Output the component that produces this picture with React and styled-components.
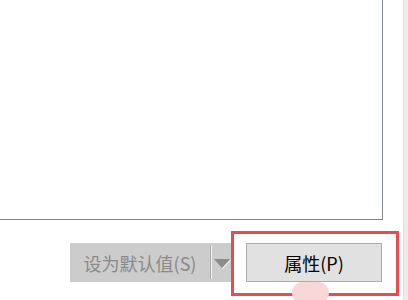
import React from 'react'
import styled, { createGlobalStyle } from 'styled-components'

const GlobalStyle = createGlobalStyle`
html, body {
  margin: 0;
  padding: 0;
  background: #ffffff;
  overflow: hidden;
}
body {
  font-family: "Noto Sans CJK SC", "Noto Sans", sans-serif;
}
`

const Window = styled.div`
display: flex;
width: 408px;
height: 300px;
`
const Main = styled.div`
flex: 1;
display: flex;
flex-direction: column;
`
const ListBox = styled.div`
width: 383px;
height: 220px;
box-sizing: border-box;
background: #ffffff;
border-right: 1px solid #828790;
border-bottom: 1px solid #828790;
`
const Footer = styled.div`
display: flex;
align-items: flex-start;
padding-left: 70px;
margin-top: 11px;
`
const SplitButton = styled.div`
margin-top: 12px;
width: 161px;
height: 39px;
display: flex;
align-items: center;
background: #cccccc;
color: #8a8a8a;
font-size: 18px;
`
const MainPart = styled.div`
width: 140px;
text-align: center;
line-height: 1;
`
const Separator = styled.div`
width: 1px;
height: 33px;
background: #a9a9a9;
border-right: 1px solid #f2f2f2;
`
const ArrowPart = styled.div`
flex: 1;
display: flex;
padding-left: 2px;
padding-top: 2px;
`
const RedFrame = styled.div`
position: relative;
border: 3px solid #eb4a4f;
padding: 9px 14px 11px 12px;
`
const Button = styled.button`
width: 136px;
height: 39px;
box-sizing: border-box;
background: #e1e1e1;
border: 1px solid #adadad;
color: #000000;
font-family: inherit;
font-size: 18px;
line-height: 1;
padding: 0;
`
const Pill = styled.div`
position: absolute;
left: 58px;
top: 48px;
width: 37px;
height: 22px;
border-radius: 11px;
background: #f9d6d8;
`
const Strip = styled.div`
width: 5px;
box-sizing: border-box;
background: #ececec;
border-left: 1px solid #e2e2e2;
`

const App = () => {
  return (
    <Window>
      <GlobalStyle />
      <Main>
        <ListBox />
        <Footer>
          <SplitButton>
            <MainPart>设为默认值(S)</MainPart>
            <Separator />
            <ArrowPart>
              <svg width="17" height="10" viewBox="0 0 17 10">
                <polygon points="0,0 16,0 8,9" fill="#8c8c8c" />
                <line x1="8.5" y1="9.5" x2="16.5" y2="1" stroke="#ffffff" strokeWidth="1" />
              </svg>
            </ArrowPart>
          </SplitButton>
          <RedFrame>
            <Button>属性(P)</Button>
            <Pill />
          </RedFrame>
        </Footer>
      </Main>
      <Strip />
    </Window>
  )
}

export default App
